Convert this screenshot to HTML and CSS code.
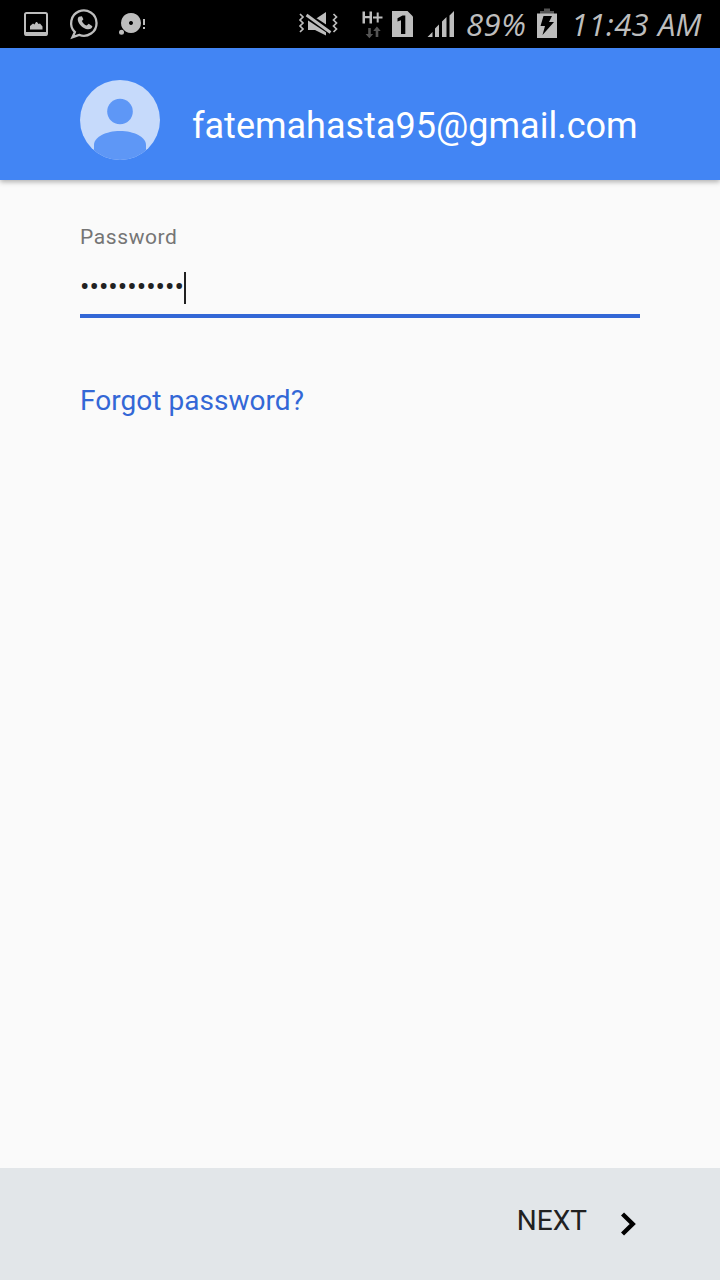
FILE: index.html
```
<!DOCTYPE html>
<html lang="en">
<head>
<meta charset="utf-8">
<title>Sign in</title>
<link rel="stylesheet" href="styles.css">
</head>
<body>
<div class="screen">
  <div class="status-bar">
    <svg class="notifications" width="150" height="48" viewBox="0 0 150 48" fill="#bdbdbd">
      <rect x="25" y="13" width="22" height="22" rx="1.500" fill="none" stroke="#bdbdbd" stroke-width="2"/>
      <path d="M25 32h22v3.500H25zM30 29.500v-3.500l3-2.500 1.500 1 1.500-2.500h1l1.500 2 1.500-.5 2.500 3v3z"/>
      <g transform="translate(1.700 -.4)">
        <path d="M73.200 32.500A12.700 12.700 0 1 1 77.500 35.300L70.800 37.600z" fill="none" stroke="#bdbdbd" stroke-width="2.300"/>
        <path d="M78.500 16.800c-2 0-3 2-2.200 4.500 1.300 4 5.500 7.700 9.500 8.300 2.500.4 4.700-.9 4.900-3l-3.700-2.400-2 1.800c-2.200-.9-4-2.600-4.800-4.700l1.500-1.600-1.500-3z"/>
      </g>
      <path fill-rule="evenodd" d="M131 13a10 10 0 1 0 .01 0zM131 21a2 2 0 1 1-.01 0z"/>
      <circle cx="121.500" cy="32.300" r="2.500"/>
      <path d="M143 19h2v6h-2zM143 27h2v2h-2z"/>
    </svg>
    <svg class="radio" width="158" height="48" viewBox="298 0 158 48" fill="#bdbdbd">
      <path d="M308 20v10h7l11 5.500V12l-9 6z"/>
      <path d="M305 14.500l28 18.500" stroke="#000" stroke-width="6.500"/>
      <path d="M306.500 15l24 17.500" stroke="#bdbdbd" stroke-width="2.800"/>
      <path d="M300 14l3 3-3 3 3 3-3 3 3 3-3 3M333.500 14l3 3-3 3 3 3-3 3 3 3-3 3" fill="none" stroke="#bdbdbd" stroke-width="1.700"/>
      <path d="M362.500 11.500h2.500v4.500h4.500v-4.500h2.500v12h-2.500v-5.200H365v5.200h-2.500zM376.700 12.500h2v4h3.800v2h-3.800v4h-2v-4h-3.700v-2h3.700z"/>
      <path fill="#555" d="M368.200 28h2.600v6h2.400l-3.800 4.200-3.800-4.200h2.600zM375.700 37h2.600v-6h2.400l-3.800-4.500-3.700 4.500h2.500z"/>
      <path d="M392 11h15.500l5.500 5.500V37h-21z"/>
      <path fill="#000" d="M402.500 15.500h2.800V34H401V20.200l-3.500 1.300v-3.300z"/>
      <path d="M427.500 37l5-5v5zM435 37v-8.500l4-4V37zM442 37V21.500l4.500-4.500v20zM449.500 37V15.500l4.500-4.500v26z"/>
    </svg>
    <span class="hand battery-level">89%</span>
    <svg class="battery" width="20" height="48" viewBox="537 0 20 48">
      <path fill="#555" d="M544 8.500h6V11h4v3h-14v-3h4z"/>
      <path fill="#bdbdbd" d="M537 13.500h20V38h-20z"/>
      <path fill="#000" d="M543.500 16h8.500l-3 6h5l-11.500 13 2.500-9h-4.500z"/>
    </svg>
    <span class="hand hour">11:43</span>
    <span class="hand meridiem">AM</span>
  </div>
  <header class="account">
    <svg class="avatar" width="80" height="80" viewBox="0 0 80 80">
      <defs><clipPath id="disc"><circle cx="40" cy="40" r="40"/></clipPath></defs>
      <g clip-path="url(#disc)">
        <path fill="#c6dafb" d="M0 0h80v80H0z"/>
        <circle cx="40" cy="31.500" r="12.800" fill="#5e97f6"/>
        <path fill="#5e97f6" d="M14 80V65c0-8 12-14 26-14s26 6 26 14v15z"/>
      </g>
    </svg>
    <span class="email">fatemahasta95@gmail.com</span>
  </header>
  <main class="form">
    <div class="label">Password</div>
    <div class="field"><span class="bullets">•••••••••••</span><span class="caret"></span></div>
    <a class="forgot">Forgot password?</a>
  </main>
  <footer class="actions">
    <span class="next">NEXT</span>
    <svg class="chevron" width="16" height="24" viewBox="0 0 16 24"><path d="M1.500 2l10.200 10L1.500 22" fill="none" stroke="#000" stroke-width="4.400"/></svg>
  </footer>
</div>
</body>
</html>
```
FILE: styles.css
```
body {
  margin: 0;
  font-family: Roboto, sans-serif;
}
.screen {
  width: 720px;
  height: 1280px;
  display: flex;
  flex-direction: column;
  overflow: hidden;
  background: #fafafa;
}
.status-bar {
  height: 48px;
  flex: none;
  display: flex;
  background: #000;
  color: #bdbdbd;
}
.status-bar svg {
  flex: none;
}
.radio {
  margin-left: 148px;
}
.hand {
  flex: none;
  box-sizing: border-box;
  white-space: nowrap;
  font: italic 400 31px/48px "Open Sans", sans-serif;
}
.battery-level {
  width: 81px;
  padding-left: 10px;
  letter-spacing: 0.5px;
}
.hour {
  width: 101px;
  padding-left: 14px;
  letter-spacing: 0.4px;
}
.meridiem {
  font-size: 31px;
}
.account {
  height: 132px;
  flex: none;
  box-sizing: border-box;
  padding: 32px 80px 0;
  display: flex;
  gap: 32px;
  background: #4285f4;
  box-shadow: 0 2px 5px rgba(0, 0, 0, 0.3);
}
.avatar {
  flex: none;
}
.email {
  font-size: 36px;
  line-height: 42px;
  padding-top: 25px;
  color: #fff;
}
.form {
  flex: 1;
  padding: 45px 80px 0;
}
.label {
  font-size: 21px;
  line-height: 24px;
  letter-spacing: 0.6px;
  color: #757575;
}
.field {
  height: 43px;
  margin-top: 22px;
  display: flex;
  border-bottom: 4px solid #3367d6;
}
.bullets {
  font-size: 28px;
  line-height: 32px;
  color: #212121;
}
.caret {
  width: 2px;
  height: 32px;
  margin-top: 1px;
  background: #212121;
}
.forgot {
  display: block;
  margin-top: 66px;
  font-size: 28px;
  line-height: 34px;
  letter-spacing: 0.04px;
  color: #3367d6;
}
.actions {
  height: 112px;
  flex: none;
  box-sizing: border-box;
  padding: 36px 83px 0 0;
  display: flex;
  justify-content: flex-end;
  gap: 34px;
  background: #e2e6e9;
}
.next {
  font-size: 28px;
  line-height: 34px;
  color: #212121;
}
.chevron {
  margin-top: 8px;
}
```
